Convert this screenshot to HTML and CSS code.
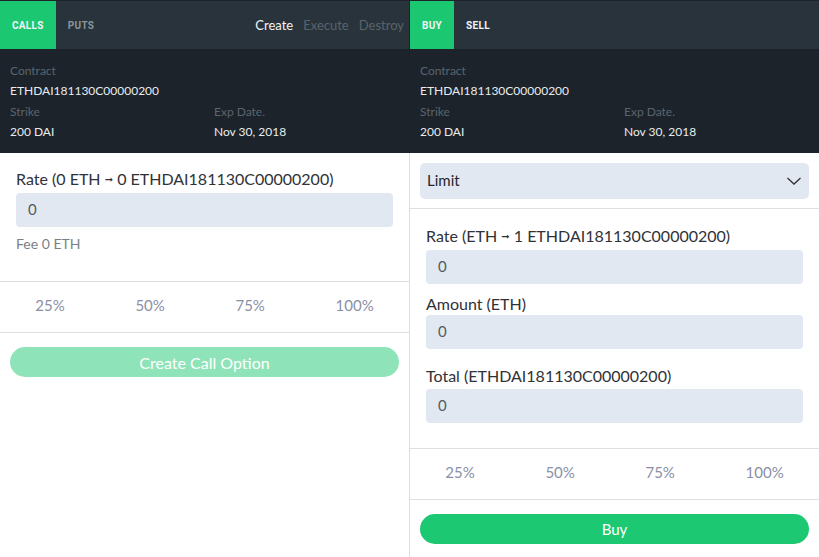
FILE: index.html
```html
<!DOCTYPE html>
<html>
<head>
<meta charset="utf-8">
<link rel="stylesheet" href="styles.css">
</head>
<body>
<div class="app">
  <div class="heads">
    <div class="head">
      <div class="tabbar">
        <div class="tab active">CALLS</div>
        <div class="tab muted">PUTS</div>
        <div class="actions">
          <span class="action on">Create</span>
          <span class="action">Execute</span>
          <span class="action">Destroy</span>
        </div>
      </div>
      <div class="info">
        <div class="info-full">
          <div class="info-label">Contract</div>
          <div class="info-value">ETHDAI181130C00000200</div>
        </div>
        <div class="info-grid">
          <div>
            <div class="info-label">Strike</div>
            <div class="info-value">200 DAI</div>
          </div>
          <div>
            <div class="info-label">Exp Date.</div>
            <div class="info-value">Nov 30, 2018</div>
          </div>
        </div>
      </div>
    </div>
    <div class="head">
      <div class="tabbar">
        <div class="tab active">BUY</div>
        <div class="tab">SELL</div>
      </div>
      <div class="info">
        <div class="info-full">
          <div class="info-label">Contract</div>
          <div class="info-value">ETHDAI181130C00000200</div>
        </div>
        <div class="info-grid">
          <div>
            <div class="info-label">Strike</div>
            <div class="info-value">200 DAI</div>
          </div>
          <div>
            <div class="info-label">Exp Date.</div>
            <div class="info-value">Nov 30, 2018</div>
          </div>
        </div>
      </div>
    </div>
  </div>
  <div class="bodies">
    <div class="panel">
      <div class="form form-left">
        <div class="label">Rate (0 ETH <span class="arrow">&#10142;</span> 0 ETHDAI181130C00000200)</div>
        <div class="input">0</div>
        <div class="fee">Fee 0 ETH</div>
      </div>
      <div class="percents">
        <span>25%</span><span>50%</span><span>75%</span><span>100%</span>
      </div>
      <div class="btn-wrap"><div class="btn btn-light">Create Call Option</div></div>
    </div>
    <div class="panel">
      <div class="select-wrap">
        <div class="select">
          <span>Limit</span>
          <svg class="chev" width="16" height="10" viewBox="0 0 16 10"><path d="M1.5 2 L8 8 L14.5 2" fill="none" stroke="#333" stroke-width="1.3"/></svg>
        </div>
      </div>
      <div class="form form-right">
        <div class="label">Rate (ETH <span class="arrow">&#10142;</span> 1 ETHDAI181130C00000200)</div>
        <div class="input">0</div>
        <div class="label label-amount">Amount (ETH)</div>
        <div class="input input-tight">0</div>
        <div class="label label-total">Total (ETHDAI181130C00000200)</div>
        <div class="input">0</div>
      </div>
      <div class="percents">
        <span>25%</span><span>50%</span><span>75%</span><span>100%</span>
      </div>
      <div class="btn-wrap"><div class="btn btn-green">Buy</div></div>
    </div>
  </div>
</div>
</body>
</html>
```

FILE: styles.css
```css
* { box-sizing: border-box; }
html, body { margin: 0; padding: 0; }
body {
  font-family: Lato, "Noto Sans", sans-serif;
  background: #fff;
  width: 819px;
  height: 557px;
  overflow: hidden;
}
.app { display: flex; flex-direction: column; height: 557px; }

.heads {
  display: grid;
  grid-template-columns: 409px 1fr;
  column-gap: 1px;
  background: #1a2129;
}
.head { background: #1c232b; }
.tabbar {
  height: 48px;
  margin-top: 1px;
  background: #29333b;
  display: flex;
  align-items: stretch;
}
.tab {
  padding: 0 12px;
  display: flex;
  align-items: center;
  font-family: Roboto, sans-serif;
  font-weight: 700;
  font-size: 10px;
  letter-spacing: 0.3px;
  color: #f2f4f5;
}
.tab.active { background: #1cc771; }
.tab.muted { color: #8b939a; }
.actions {
  margin-left: auto;
  display: flex;
  align-items: center;
  gap: 10px;
  padding-right: 5px;
  font-size: 13px;
}
.action { color: #59636b; }
.action.on { color: #f2f4f5; }

.info {
  height: 104px;
  padding: 12px 10px 0 10px;
  font-size: 12px;
  line-height: 20px;
}
.info-label { color: #5b656d; }
.info-value { color: #e9ecee; }
.info-grid {
  display: grid;
  grid-template-columns: 204px 1fr;
  margin-top: 1px;
}

.bodies {
  flex: 1;
  display: grid;
  grid-template-columns: 409px 1fr;
  column-gap: 1px;
  background: #dcdfe4;
}
.panel { background: #fff; }

.form { border-bottom: 1px solid #dcdfe4; }
.form-left { padding: 15px 16px 28px 16px; }
.form-right { padding: 16px 16px 25px 16px; }
.label {
  font-size: 16px;
  line-height: 22px;
  color: #2f3237;
}
.arrow { font-family: "DejaVu Sans", sans-serif; font-size: 10px; vertical-align: 2px; }
.input {
  margin-top: 2px;
  height: 34px;
  background: #e1e8f2;
  border-radius: 4px;
  padding-left: 12px;
  font-size: 15px;
  line-height: 32px;
  color: #555b62;
}
.input-tight { margin-top: 0; }
.label-amount { margin-top: 9px; }
.label-total { margin-top: 16px; }
.fee {
  margin-top: 8px;
  font-size: 14px;
  line-height: 18px;
  color: #7a7f85;
}

.select-wrap {
  padding: 10px 10px 9px 10px;
  border-bottom: 1px solid #dcdfe4;
}
.select {
  height: 36px;
  background: #e1e8f2;
  border-radius: 5px;
  display: flex;
  align-items: center;
  justify-content: space-between;
  padding: 0 7px 3px 7px;
  font-size: 15px;
  color: #23262a;
}
.chev { display: block; margin-top: 2px; }

.percents {
  height: 51px;
  border-bottom: 1px solid #dcdfe4;
  display: flex;
  justify-content: space-around;
  align-items: center;
  padding-bottom: 4px;
  font-size: 15px;
  color: #8a8fa6;
}
.btn-wrap { padding: 14px 10px; }
.btn {
  height: 30px;
  border-radius: 15px;
  display: flex;
  align-items: center;
  justify-content: center;
  color: #fff;
  font-size: 16px;
}
.btn-light { background: #8ee4b8; }
.btn-green { background: #1cc871; font-size: 15px; }
```
